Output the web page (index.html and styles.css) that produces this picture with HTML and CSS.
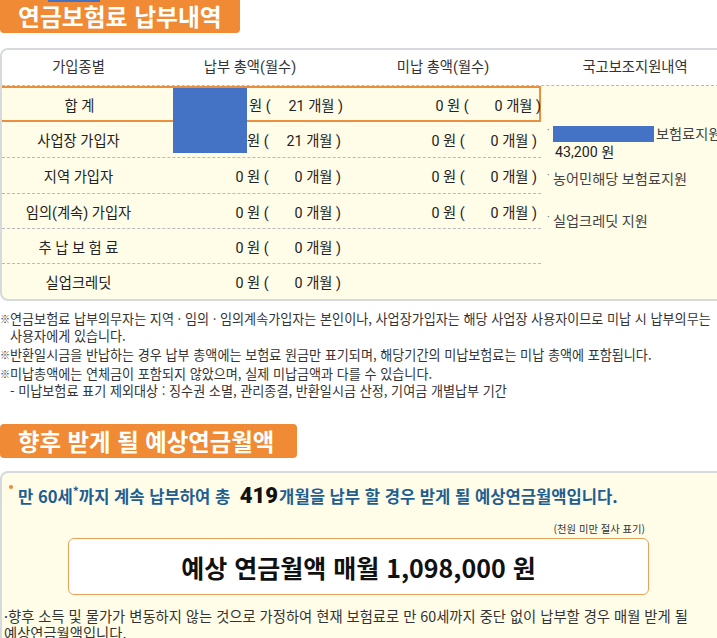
FILE: index.html
```html
<!DOCTYPE html>
<html lang="ko">
<head>
<meta charset="utf-8">
<title>연금보험료 납부내역</title>
<link rel="stylesheet" href="styles.css">
</head>
<body>
<div class="page">
  <div class="tab tab1"><span class="blue-mark"></span>연금보험료 납부내역</div>

  <div class="card table-card">
    <div class="thead">
      <div class="th">가입종별</div>
      <div class="th">납부 총액(월수)</div>
      <div class="th">미납 총액(월수)</div>
      <div class="th">국고보조지원내역</div>
    </div>
    <div class="tbody">
      <div class="rows">
        <span class="redact-amt"></span>
        <div class="row total">
          <div class="cell name">합 계</div>
          <div class="cell val"><span class="v">0 원 (<span class="mon">21</span> 개월 )</span></div>
          <div class="cell val"><span class="v">0 원 (<span class="mon">0</span> 개월 )</span></div>
        </div>
        <div class="row sep">
          <div class="cell name">사업장 가입자</div>
          <div class="cell val"><span class="v">0 원 (<span class="mon">21</span> 개월 )</span></div>
          <div class="cell val"><span class="v">0 원 (<span class="mon">0</span> 개월 )</span></div>
        </div>
        <div class="row sep">
          <div class="cell name">지역 가입자</div>
          <div class="cell val"><span class="v">0 원 (<span class="mon">0</span> 개월 )</span></div>
          <div class="cell val"><span class="v">0 원 (<span class="mon">0</span> 개월 )</span></div>
        </div>
        <div class="row sep short">
          <div class="cell name">임의(계속) 가입자</div>
          <div class="cell val"><span class="v">0 원 (<span class="mon">0</span> 개월 )</span></div>
          <div class="cell val"><span class="v">0 원 (<span class="mon">0</span> 개월 )</span></div>
        </div>
        <div class="row sep short">
          <div class="cell name">추 납 보 험 료</div>
          <div class="cell val"><span class="v">0 원 (<span class="mon">0</span> 개월 )</span></div>
          <div class="cell val"></div>
        </div>
        <div class="row short">
          <div class="cell name">실업크레딧</div>
          <div class="cell val"><span class="v">0 원 (<span class="mon">0</span> 개월 )</span></div>
          <div class="cell val"></div>
        </div>
      </div>
      <div class="support">
        <div class="sup-line first"><span class="dot">·</span><span class="redact-name"></span>보험료지원</div>
        <div class="sup-line amount">43,200 원</div>
        <div class="sup-line"><span class="dot">·</span>농어민해당 보험료지원</div>
        <div class="sup-line last"><span class="dot">·</span>실업크레딧 지원</div>
      </div>
    </div>
  </div>

  <div class="notes">
    <p class="note"><span class="mark">※</span><span>연금보험료 납부의무자는 지역 · 임의 · 임의계속가입자는 본인이나, 사업장가입자는 해당 사업장 사용자이므로 미납 시 납부의무는 사용자에게 있습니다.</span></p>
    <p class="note"><span class="mark">※</span><span>반환일시금을 반납하는 경우 납부 총액에는 보험료 원금만 표기되며, 해당기간의 미납보험료는 미납 총액에 포함됩니다.</span></p>
    <p class="note"><span class="mark">※</span><span>미납총액에는 연체금이 포함되지 않았으며, 실제 미납금액과 다를 수 있습니다.<br>- 미납보험료 표기 제외대상 : 징수권 소멸, 관리종결, 반환일시금 산정, 기여금 개별납부 기간</span></p>
  </div>

  <div class="tab tab2">향후 받게 될 예상연금월액</div>

  <div class="card est-card">
    <p class="headline"><span class="bullet"></span>만 60세<sup>*</sup>까지 계속 납부하여 총 <strong class="big">419</strong>개월을 납부 할 경우 받게 될 예상연금월액입니다.</p>
    <div class="est-wrap">
      <p class="cut-note">(천원 미만 절사 표기)</p>
      <div class="est-box">예상 연금월액 매월 1,098,000 원</div>
    </div>
    <p class="foot">·향후 소득 및 물가가 변동하지 않는 것으로 가정하여 현재 보험료로 만 60세까지 중단 없이 납부할 경우 매월 받게 될 예상연금월액입니다.</p>
  </div>
</div>
</body>
</html>
```
FILE: styles.css
```css
* { box-sizing: border-box; }
html, body { margin: 0; padding: 0; }
body {
  font-family: Roboto, "Noto Sans CJK KR", sans-serif;
  color: #333;
  background: #fff;
  overflow: hidden;
}
.page { width: 731px; }

.tab {
  position: relative;
  background: #f08a34;
  color: #fff;
  font-family: "Noto Sans CJK KR", sans-serif;
  font-weight: 700;
  font-size: 23.8px;
  height: 34px;
  line-height: 34px;
  padding-left: 18px;
  border-radius: 4px;
  white-space: nowrap;
}
.tab1 { width: 240px; height: 33px; line-height: 32px; border-radius: 0 0 4px 4px; }
.tab2 { width: 297px; margin-top: 25px; font-size: 23.4px; }
.blue-mark {
  position: absolute;
  left: 48px; top: 0;
  width: 52px; height: 2px;
  background: #4472c4;
}

.card {
  border: 2px solid #d6d9dd;
  border-radius: 8px;
  overflow: hidden;
}
.table-card { margin-top: 15px; background: #fffde8; }

.thead {
  display: grid;
  grid-template-columns: 153px 190px 196px 1fr;
  height: 36px;
  background: #fff;
  border-bottom: 1px dashed #b9b9b9;
}
.th {
  font-size: 14.3px;
  color: #333;
  text-align: center;
  line-height: 35px;
  white-space: nowrap;
}

.tbody { display: flex; }
.rows { position: relative; width: 539px; flex: none; }
.row {
  display: grid;
  grid-template-columns: 153px 190px 196px;
  height: 36px;
  font-size: 14.3px;
  color: #222;
}
.row.short { height: 35px; }
.row.sep { border-bottom: 1px dashed #b9b9b9; }
.row.total {
  border: 2px solid #e98f3d;
  margin-left: -2px;
  width: 541px;
  grid-template-columns: 155px 190px 196px;
}
.cell { display: flex; align-items: center; white-space: nowrap; }
.cell.name { justify-content: center; }
.cell.val { justify-content: flex-end; padding-right: 4px; }
.row.total .cell.val:last-child { padding-right: 2px; }
.v { white-space: pre; }
.mon { display: inline-block; width: 34px; text-align: right; }

.redact-amt {
  position: absolute;
  left: 171px; top: 2px;
  width: 74px; height: 65px;
  background: #4472c4;
  z-index: 2;
}

.support {
  flex: 1;
  padding: 40px 0 0 6px;
  font-size: 14.2px;
  color: #444;
  white-space: nowrap;
}
.sup-line { line-height: 16px; display: flex; align-items: center; }
.sup-line.amount { margin-top: 2px; padding-left: 8px; color: #222; line-height: 17px; }
.sup-line + .sup-line:not(.amount) { margin-top: 10px; }
.sup-line.last { margin-top: 26px !important; }
.dot { font-size: 10px; width: 6px; color: #555; align-self: flex-start; line-height: 10px; }
.redact-name {
  display: inline-block;
  width: 101px; height: 16px;
  background: #4472c4;
  margin-right: 2px;
}

.notes {
  width: 717px;
  margin-top: 9px;
  font-family: "Noto Sans CJK KR", sans-serif;
  font-size: 13.1px;
  color: #333;
}
.note {
  display: flex;
  margin: 0 0 2px;
  line-height: 17px;
}
.note .mark { width: 10px; flex: none; font-size: 10px; }

.est-card {
  margin-top: 13px;
  background: #fffde8;
  height: 200px;
  padding-top: 8px;
}
.headline {
  margin: 0;
  padding-left: 16px;
  font-family: "Noto Sans CJK KR", sans-serif;
  font-weight: 700;
  font-size: 16.6px;
  color: #1f5e93;
  line-height: 30px;
  white-space: nowrap;
}
.headline sup { font-size: 12px; line-height: 0; }
.bullet {
  display: inline-block;
  width: 4px; height: 4px;
  border-radius: 50%;
  background: #f08a34;
  margin-left: -9px;
  margin-right: 5px;
  vertical-align: 14px;
}
.big {
  font-family: Roboto, "Noto Sans CJK KR", sans-serif;
  font-size: 22px;
  color: #111;
  margin: 0 1px 0 5px;
}
.est-wrap { width: 581px; margin-left: 66px; margin-top: 12px; }
.cut-note {
  margin: 0 0 3px;
  text-align: right;
  padding-right: 4px;
  font-family: "Noto Sans CJK KR", sans-serif;
  font-size: 10.3px;
  line-height: 12px;
  color: #333;
}
.est-box {
  height: 57px;
  background: #fff;
  border: 1px solid #e9a05a;
  border-radius: 6px;
  display: flex;
  align-items: center;
  justify-content: center;
  font-family: "Noto Sans CJK KR", sans-serif;
  font-weight: 700;
  font-size: 25px;
  color: #111;
}
.foot {
  margin: 12px 0 0;
  padding-left: 2px;
  font-family: "Noto Sans CJK KR", sans-serif;
  font-size: 14.3px;
  line-height: 17px;
  color: #333;
  width: 696px;
}
```
